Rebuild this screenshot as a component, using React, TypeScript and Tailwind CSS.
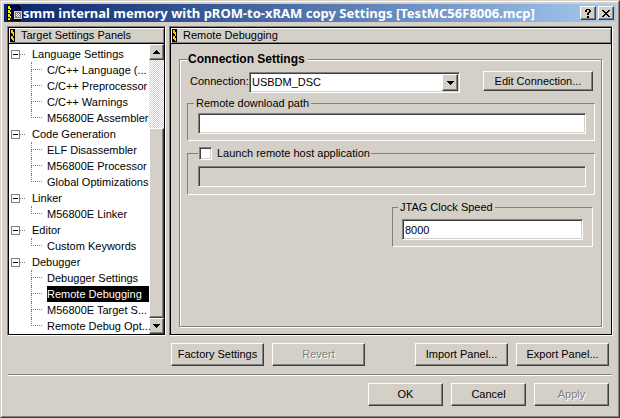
import React, { useState } from "react";

const raised =
  "bg-[#d4d0c8] border border-t-white border-l-white border-b-[#404040] border-r-[#404040] shadow-[inset_-1px_-1px_0_#808080]";
const sunken =
  "border border-t-[#808080] border-l-[#808080] border-b-white border-r-white shadow-[inset_1px_1px_0_#404040,inset_-1px_-1px_0_#d4d0c8]";
const groupBox =
  "min-w-0 border border-t-[#808080] border-l-[#808080] border-b-white border-r-white";

type Branch = { name: string; items: string[] };

const branches: Branch[] = [
  {
    name: "Language Settings",
    items: ["C/C++ Language (...", "C/C++ Preprocessor", "C/C++ Warnings", "M56800E Assembler"],
  },
  {
    name: "Code Generation",
    items: ["ELF Disassembler", "M56800E Processor", "Global Optimizations"],
  },
  { name: "Linker", items: ["M56800E Linker"] },
  { name: "Editor", items: ["Custom Keywords"] },
  {
    name: "Debugger",
    items: ["Debugger Settings", "Remote Debugging", "M56800E Target S...", "Remote Debug Opt..."],
  },
];

function PushButton({
  children,
  className,
  disabled,
}: {
  children: React.ReactNode;
  className: string;
  disabled?: boolean;
}) {
  return (
    <button
      type="button"
      disabled={disabled}
      className={`${raised} ${className} shrink-0 whitespace-nowrap text-center disabled:text-[#808080] disabled:[text-shadow:1px_1px_0_#fff]`}
    >
      {children}
    </button>
  );
}

function Stripe() {
  return (
    <svg className="shrink-0" width="5" height="13" viewBox="0 0 5 13" shapeRendering="crispEdges" aria-hidden="true">
      <rect width="5" height="13" fill="#000" />
      <path d="M1 1h2v2h1v4H3V5H2V4H1zM1 7h2v2h1v3H3v-1H2v-1H1z" fill="#ffcc00" />
    </svg>
  );
}

function Pane({ title, className, children }: { title: string; className: string; children: React.ReactNode }) {
  return (
    <section
      className={`${className} flex flex-col border border-t-[#808080] border-l-[#808080] border-b-white border-r-white`}
    >
      <div className="flex min-h-0 flex-1 flex-col border border-black">
        <h2 className="flex h-4 items-center gap-1.5 border-b border-black pl-px shadow-[inset_1px_1px_0_#fff,inset_-1px_-1px_0_#808080]">
          <Stripe />
          {title}
        </h2>
        {children}
      </div>
    </section>
  );
}

function Triangle({ up }: { up?: boolean }) {
  return (
    <svg width="7" height="4" viewBox="0 0 7 4" shapeRendering="crispEdges" aria-hidden="true">
      <path d={up ? "M3 0h1v1h1v1h1v1h1v1H0V3h1V2h1V1h1z" : "M0 0h7v1H6v1H5v1H4v1H3V3H2V2H1V1H0z"} />
    </svg>
  );
}

function Tree() {
  const [selected, setSelected] = useState("Remote Debugging");
  return (
    <ul className="z-10 min-w-0 flex-1 pt-0.5">
      {branches.map((branch) => (
        <li key={branch.name}>
          <div className="flex h-4 items-center pl-0.5">
            <button
              type="button"
              aria-label={`Collapse ${branch.name}`}
              className="flex size-[9px] items-center justify-center border border-[#808080]"
            >
              <span className="h-px w-[5px] bg-black" />
            </button>
            <span className="w-[5px] border-t border-dotted border-[#808080]" />
            <span className="pl-[7px]">{branch.name}</span>
          </div>
          <ul>
            {branch.items.map((item, i) => (
              <li key={item} className="flex h-4 pl-[22px]">
                <span className="w-[11px] shrink-0">
                  <span className="block h-2 border-b border-l border-dotted border-[#808080]" />
                  {i < branch.items.length - 1 && (
                    <span className="block h-2 border-l border-dotted border-[#808080]" />
                  )}
                </span>
                <button
                  type="button"
                  aria-pressed={item === selected}
                  onClick={() => setSelected(item)}
                  className="ml-[5px] min-w-0 flex-1 whitespace-nowrap text-left aria-pressed:bg-black aria-pressed:text-white"
                >
                  {item}
                </button>
              </li>
            ))}
          </ul>
        </li>
      ))}
    </ul>
  );
}

function ScrollBar() {
  return (
    <div className="flex w-[15px] shrink-0 flex-col bg-[repeating-conic-gradient(#fff_0_25%,#d4d0c8_0_50%)] bg-[length:2px_2px]">
      <button type="button" aria-label="Scroll up" className={`${raised} flex h-4 items-center justify-center`}>
        <Triangle up />
      </button>
      <div className="flex-[69]" />
      <div className={`${raised} flex-[189]`} />
      <button type="button" aria-label="Scroll down" className={`${raised} flex h-4 items-center justify-center`}>
        <Triangle />
      </button>
    </div>
  );
}

function AppIcon() {
  return (
    <svg className="shrink-0" width="16" height="16" viewBox="0 0 16 16" shapeRendering="crispEdges" aria-hidden="true">
      <path d="M0 0h11l3 3v13H0z" fill="#000" />
      <path d="M4 1h7v3h3v11H4z" fill="#000050" />
      <path d="M1 1h2v2h1v2H3V4H1zM1 5h2v2h1v2H3V8H1zM1 9h2v2h1v2H3v-1H1zM1 13h2v2H1z" fill="#ffee00" />
      <path d="M7 6h8v8H7z" fill="#d4d0c8" />
      <path d="M8 7h6v6H8z" fill="#808080" />
      <path d="M9 8h1v1H9zM11 8h1v1h-1zM10 9h1v1h-1zM12 9h1v1h-1zM9 10h1v1H9zM11 10h1v1h-1zM10 11h1v1h-1zM12 11h1v1h-1z" fill="#fff" />
    </svg>
  );
}

export default function App() {
  const [launch, setLaunch] = useState(false);
  return (
    <main className="flex min-h-screen flex-col border border-t-[#d4d0c8] border-l-[#d4d0c8] border-b-[#404040] border-r-[#404040] bg-[#d4d0c8] font-['Liberation_Sans',Arial,sans-serif] text-[11px] leading-[13px] text-black">
      <div className="flex flex-1 flex-col border border-t-white border-l-white border-b-[#808080] border-r-[#808080] pb-[10px]">
        <header className="mx-0.5 mt-0.5 flex h-[18px] items-center bg-linear-to-r from-[#0a246a] to-[#a6caf0] pl-[3px] pr-0.5">
          <AppIcon />
          <h1 className="min-w-0 flex-1 overflow-hidden whitespace-nowrap font-['Noto_Sans',Verdana,sans-serif] text-[13px] leading-[18px] font-bold text-white">
            smm internal memory with pROM-to-xRAM copy Settings [TestMC56F8006.mcp]
          </h1>
          <div className="flex gap-0.5">
            <button type="button" aria-label="Help" className={`${raised} flex h-[14px] w-4 items-center justify-center`}>
              <svg width="6" height="9" viewBox="0 0 6 9" shapeRendering="crispEdges" aria-hidden="true">
                <path d="M1 0h4v1h1v2H5v1H4v2H2V4h1V3h1V1H2v2H0V1h1zM2 7h2v2H2z" />
              </svg>
            </button>
            <button type="button" aria-label="Close" className={`${raised} flex h-[14px] w-4 items-center justify-center`}>
              <svg width="8" height="7" viewBox="0 0 8 7" shapeRendering="crispEdges" aria-hidden="true">
                <path d="M0 0h2v1h1v1h2V1h1V0h2v1H7v1H6v1H5v1h1v1h1v1h1v1H6V6H5V5H3v1H2v1H0V6h1V5h1V4h1V3H2V2H1V1H0z" />
              </svg>
            </button>
          </div>
        </header>

        <div className="mx-[5px] mt-1 flex flex-1 gap-[3px]">
          <Pane title="Target Settings Panels" className="w-[159px] shrink-0">
            <div className="flex flex-1 bg-white">
              <Tree />
              <ScrollBar />
            </div>
          </Pane>

          <Pane title="Remote Debugging" className="min-w-0 flex-1">
            <div className="flex flex-1 flex-col pt-2 pr-[9px] pb-[7px] pl-2">
              <fieldset className="min-w-0 flex-1 border border-[#808080] pr-1.5 pl-[7px] shadow-[1px_1px_0_#fff,inset_1px_1px_0_#fff]">
                <legend className="ml-px bg-[#d4d0c8] pr-[3px] text-[12px] leading-[14px] font-bold">
                  Connection Settings
                </legend>
                <div className="flex pt-[5px] pl-[3px]">
                  <label htmlFor="connection" className="w-[59px] shrink-0 pt-1">
                    Connection:
                  </label>
                  <div className="relative mt-px w-[211px]">
                    <select
                      id="connection"
                      className={`${sunken} block h-[21px] w-full appearance-none bg-white pl-0.5`}
                    >
                      <option>USBDM_DSC</option>
                    </select>
                    <span
                      className={`${raised} pointer-events-none absolute top-0.5 right-0.5 bottom-0.5 flex w-4 items-center justify-center`}
                    >
                      <Triangle />
                    </span>
                  </div>
                  <PushButton className="mr-0.5 ml-auto h-5 w-[110px]">Edit Connection...</PushButton>
                </div>

                <fieldset className={`${groupBox} mt-1 pt-[3px] pr-2 pb-1.5 pl-[10px]`}>
                  <legend className="-ml-1 px-0.5">
                    <label htmlFor="download-path">Remote download path</label>
                  </legend>
                  <input id="download-path" className={`${sunken} block h-[21px] w-full bg-white px-0.5`} />
                </fieldset>

                <fieldset className={`${groupBox} mt-1.5 pt-1.5 pr-2 pb-[7px] pl-[10px]`}>
                  <legend className="px-px">
                    <label className="flex items-center gap-[5px]">
                      <input
                        type="checkbox"
                        checked={launch}
                        onChange={(e) => setLaunch(e.target.checked)}
                        className={`${sunken} size-[13px] appearance-none bg-white checked:bg-black`}
                      />
                      Launch remote host application
                    </label>
                  </legend>
                  <input
                    aria-label="Remote host application path"
                    disabled={!launch}
                    className={`${sunken} block h-[21px] w-full px-0.5 enabled:bg-white`}
                  />
                </fieldset>

                <fieldset className={`${groupBox} mt-1.5 mr-0.5 ml-auto w-[201px] px-[9px] pt-[5px] pb-1.5`}>
                  <legend className="-ml-1 px-0.5">
                    <label htmlFor="clock-speed">JTAG Clock Speed</label>
                  </legend>
                  <input
                    id="clock-speed"
                    defaultValue="8000"
                    className={`${sunken} block h-[21px] w-full bg-white px-0.5`}
                  />
                </fieldset>
              </fieldset>
            </div>
          </Pane>
        </div>

        <div className="mt-[7px] mr-[9px] ml-[169px] flex gap-2">
          <PushButton className="h-[23px] w-[93px]">Factory Settings</PushButton>
          <PushButton className="h-[23px] w-[93px]" disabled>
            Revert
          </PushButton>
          <PushButton className="ml-auto h-[23px] w-[93px]">Import Panel...</PushButton>
          <PushButton className="h-[23px] w-[93px]">Export Panel...</PushButton>
        </div>

        <hr className="mx-1.5 mt-2 h-0.5 border-t border-b border-t-[#808080] border-b-white" />

        <footer className="mt-[7px] mr-[9px] flex justify-end gap-2">
          <PushButton className="h-[23px] w-[75px]">OK</PushButton>
          <PushButton className="h-[23px] w-[75px]">Cancel</PushButton>
          <PushButton className="h-[23px] w-[75px]" disabled>
            Apply
          </PushButton>
        </footer>
      </div>
    </main>
  );
}
